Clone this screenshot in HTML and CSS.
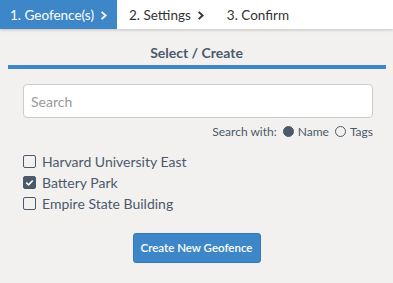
FILE: index.html
```html
<!DOCTYPE html>
<html lang="en">

<head>
  <meta charset="UTF-8">
  <meta name="viewport" content="width=device-width, initial-scale=1.0">
  <title>Geofence</title>
  <link rel="stylesheet" href="styles.css">
</head>

<body>
  <div class="gf-wizard">
    <!-- Steps -->
    <div class="gf-steps">
      <div class="gf-step gf-step-active">1. Geofence(s)
        <svg class="gf-chevron" viewBox="0 0 10 12" width="8" height="11"><path d="M2 1.5 L7 6 L2 10.5" fill="none" stroke="currentColor" stroke-width="2.4"/></svg>
      </div>
      <div class="gf-step">2. Settings
        <svg class="gf-chevron" viewBox="0 0 10 12" width="8" height="11"><path d="M2 1.5 L7 6 L2 10.5" fill="none" stroke="currentColor" stroke-width="2.4"/></svg>
      </div>
      <div class="gf-step">3. Confirm</div>
    </div>

    <div class="gf-panel">
      <div class="gf-title">Select / Create</div>
      <div class="gf-rule"></div>

      <div class="gf-body">
        <input class="gf-search" type="text" placeholder="Search">

        <div class="gf-search-with">
          <span>Search with:</span>
          <span class="gf-radio gf-radio-on"></span><span>Name</span>
          <span class="gf-radio"></span><span>Tags</span>
        </div>

        <ul class="gf-list">
          <li><span class="gf-check"></span>Harvard University East</li>
          <li><span class="gf-check gf-check-on"><svg viewBox="0 0 12 12" width="11" height="11"><path d="M2.5 6.2 L5 8.5 L9.5 3.8" fill="none" stroke="#fff" stroke-width="1.8"/></svg></span>Battery Park</li>
          <li><span class="gf-check"></span>Empire State Building</li>
        </ul>

        <div class="gf-actions">
          <button class="gf-button">Create New Geofence</button>
        </div>
      </div>
    </div>
  </div>
</body>

</html>
```

FILE: styles.css
```css
body {
  margin: 0;
  padding: 0;
  background-color: #f2f1f0;
}

/* Wrapper */
.gf-wizard {
  font-family: 'Lato', sans-serif;
  color: #4b5a6b;
  width: 393px;
  height: 283px;
  overflow: hidden;
}

/* Steg-linje */
.gf-steps {
  display: flex;
  height: 29px;
  background-color: #fff;
  box-shadow: 0 1px 3px rgba(0, 0, 0, 0.2);
  position: relative;
}

.gf-step {
  display: flex;
  align-items: center;
  gap: 6px;
  padding: 0 10px 0 12px;
  font-size: 13.5px;
  color: #333;
  white-space: nowrap;
}

.gf-step-active {
  background-color: #3d87c9;
  color: #fff;
  width: 117px;
  padding-left: 10px;
  box-sizing: border-box;
  flex-shrink: 0;
}

.gf-chevron {
  flex-shrink: 0;
  margin-top: 1px;
}

/* Panel */
.gf-title {
  text-align: center;
  font-weight: 700;
  font-size: 14px;
  color: #4b5a6b;
  margin-top: 12px;
  height: 24px;
  line-height: 24px;
}

.gf-rule {
  height: 4px;
  background-color: #3d87c9;
  margin: 0 7px 0 8px;
}

.gf-body {
  padding: 15px 20px 0 23px;
}

.gf-search {
  display: block;
  width: 100%;
  height: 34px;
  box-sizing: border-box;
  border: 1px solid #cbcbcb;
  border-radius: 4px;
  background: #fff;
  padding: 0 7px;
  font-family: 'Lato', sans-serif;
  font-size: 14px;
}

.gf-search::placeholder {
  color: #999;
}

.gf-search-with {
  display: flex;
  justify-content: flex-end;
  align-items: center;
  gap: 4px;
  margin-top: 6px;
  font-size: 12px;
  color: #4b5a6b;
}

.gf-radio {
  width: 9px;
  height: 9px;
  border: 1.5px solid #4b5a6b;
  border-radius: 50%;
  margin-left: 2px;
}

.gf-radio-on {
  background-color: #4b5a6b;
}

/* Liste */
.gf-list {
  list-style: none;
  padding: 0;
  margin: 12px 0 0;
}

.gf-list li {
  display: flex;
  align-items: center;
  gap: 6px;
  height: 21.5px;
  font-size: 14px;
  color: #4b5a6b;
}

.gf-list li + li {
  margin-top: -0.5px;
}

.gf-check {
  width: 13px;
  height: 13px;
  box-sizing: border-box;
  border: 1.5px solid #4b5a6b;
  border-radius: 2px;
  display: flex;
  align-items: center;
  justify-content: center;
}

.gf-check-on {
  background-color: #4b5a6b;
}

/* Knapp */
.gf-actions {
  display: flex;
  justify-content: center;
  margin-top: 18px;
  padding-right: 3px;
}

.gf-button {
  background-color: #3d87c9;
  color: #fff;
  border: 1px solid #3579b8;
  border-radius: 3px;
  width: 128px;
  height: 30px;
  padding: 0;
  white-space: nowrap;
  font-family: 'Lato', sans-serif;
  font-size: 11.5px;
  font-weight: 600;
}
```
